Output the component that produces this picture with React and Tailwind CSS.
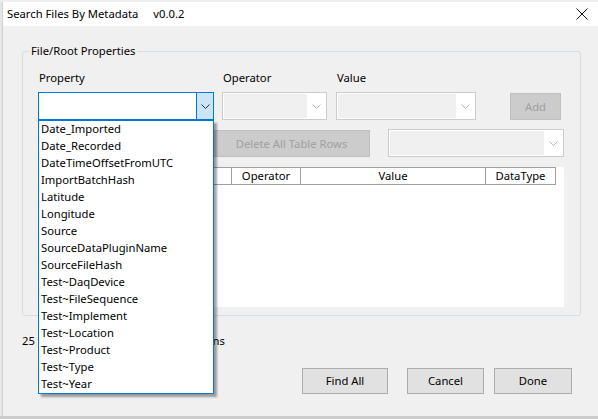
import React from "react";

function Chevron({ color = "#333" }) {
  return (
    <svg width="9" height="5" viewBox="0 0 9 5" className="block">
      <path d="M0.5 0.5 L4.5 4.5 L8.5 0.5" fill="none" stroke={color} strokeWidth="1" />
    </svg>
  );
}

function DisabledCombo({ w }) {
  return (
    <div className={`${w} h-[28px] border border-[#cccccc] bg-white flex p-[1px]`}>
      <div className="flex-1 bg-[#f0f0f0]" />
      <div className="w-[18px] flex items-center justify-center">
        <Chevron color="#b5b5b5" />
      </div>
    </div>
  );
}

const items = [
  "Date_Imported",
  "Date_Recorded",
  "DateTimeOffsetFromUTC",
  "ImportBatchHash",
  "Latitude",
  "Longitude",
  "Source",
  "SourceDataPluginName",
  "SourceFileHash",
  "Test~DaqDevice",
  "Test~FileSequence",
  "Test~Implement",
  "Test~Location",
  "Test~Product",
  "Test~Type",
  "Test~Year",
];

export default function App() {
  return (
    <div className="relative w-[598px] h-[419px] overflow-hidden bg-[#f0f0f0] text-[11.25px] leading-[16px] text-black font-['Noto_Sans',sans-serif] flex flex-col">
      <div className="h-[2px] bg-[#eeeeee]" />
      <div className="flex flex-1">
        <div className="w-[3px] bg-[#e6e6e6] border-r border-[#d0d0d0]" />
        <div className="flex-1 flex flex-col">
          {/* title bar */}
          <div className="h-[24px] bg-white flex items-center pl-[4px] pr-[10px]">
            <span>Search Files By Metadata</span>
            <span className="ml-[15px]">v0.0.2</span>
            <div className="ml-auto">
              <svg width="12" height="12" viewBox="0 0 12 12" className="block">
                <path d="M0.5 0.5 L11.5 11.5 M11.5 0.5 L0.5 11.5" stroke="#111" strokeWidth="1" />
              </svg>
            </div>
          </div>
          {/* body */}
          <div className="flex-1 flex flex-col">
            <div className="relative ml-[19px] mt-[25px] w-[559px] h-[265px] border border-[#d5dde4] rounded-[3px] pl-[15px] pt-[18px]">
              <div className="absolute left-[6px] top-[-9px] bg-[#f0f0f0] px-[2px]">File/Root Properties</div>
              <div className="flex h-[16px]">
                <div className="w-[185px] pl-[1px]">Property</div>
                <div className="w-[114px]">Operator</div>
                <div>Value</div>
              </div>
              <div className="flex mt-[6px] items-start">
                <div className="w-[176px] h-[28px] border border-[#0078d7] bg-white flex">
                  <div className="flex-1" />
                  <div className="w-[17px] bg-[#cce4f7] border-l border-[#0078d7] flex items-center justify-center">
                    <Chevron color="#333" />
                  </div>
                </div>
                <div className="ml-[8px]">
                  <DisabledCombo w="w-[105px]" />
                </div>
                <div className="ml-[9px]">
                  <DisabledCombo w="w-[140px]" />
                </div>
                <div className="ml-[34px] mt-[1px] w-[51px] h-[27px] bg-[#cccccc] border border-[#bfbfbf] text-[#a0a0a0] flex items-center justify-center">
                  Add
                </div>
              </div>
              <div className="flex mt-[9px] items-start">
                <div className="mt-[1px] w-[166px] h-[27px] bg-[#cccccc] border border-[#bfbfbf]" />
                <div className="ml-[9px] mt-[1px] w-[157px] h-[27px] bg-[#cccccc] border border-[#bfbfbf] text-[#a0a0a0] flex items-center justify-center">
                  Delete All Table Rows
                </div>
                <div className="ml-[18px]">
                  <DisabledCombo w="w-[176px]" />
                </div>
              </div>
              <div className="mt-[10px] w-[526px] h-[140px] bg-white">
                <div className="flex h-[18px] w-[518px] border-t border-b border-[#a0a0a0]">
                  <div className="w-[194px] border-l border-r border-[#a0a0a0]" />
                  <div className="w-[69px] border-r border-[#a0a0a0] flex items-center justify-center">Operator</div>
                  <div className="w-[185px] border-r border-[#a0a0a0] flex items-center justify-center">Value</div>
                  <div className="w-[70px] border-r border-[#a0a0a0] flex items-center justify-center">DataType</div>
                </div>
              </div>
            </div>
            <div className="ml-[19px] mt-[17px] h-[16px] whitespace-nowrap">25 files found matching the conditions</div>
            <div className="flex mt-[19px] ml-[299px]">
              <div className="w-[86px] h-[26px] bg-[#e1e1e1] border border-[#adadad] flex items-center justify-center">Find All</div>
              <div className="ml-[19px] w-[77px] h-[26px] bg-[#e1e1e1] border border-[#adadad] flex items-center justify-center">Cancel</div>
              <div className="ml-[10px] w-[78px] h-[26px] bg-[#e1e1e1] border border-[#adadad] flex items-center justify-center">Done</div>
            </div>
          </div>
        </div>
      </div>
      <div className="h-[3px] bg-[#cccccc]" />

      {/* dropdown list */}
      <div className="absolute left-[38px] top-[120px] w-[176px] h-[274px] bg-white border border-[#0078d7] shadow-[3px_3px_2px_rgba(0,0,0,0.35)] flex flex-col">
        {items.map((t) => (
          <div key={t} className="h-[17px] leading-[15px] pl-[2px] whitespace-nowrap">
            {t}
          </div>
        ))}
      </div>
    </div>
  );
}
